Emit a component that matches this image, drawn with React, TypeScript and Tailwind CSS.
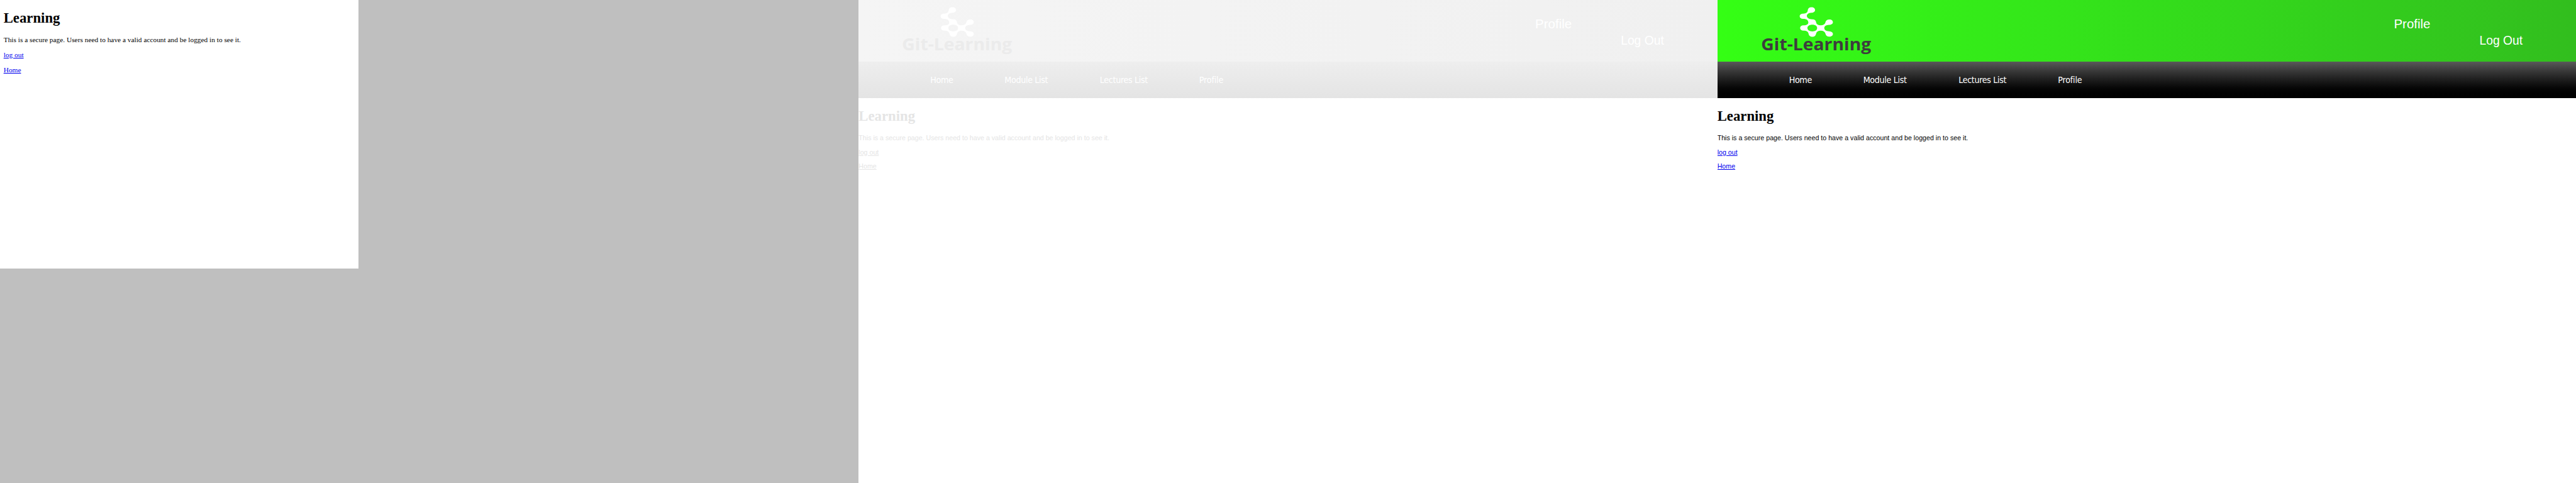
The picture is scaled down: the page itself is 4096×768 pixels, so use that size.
import clsx from "clsx";

const MESSAGE = "This is a secure page. Users need to have a valid account and be logged in to see it.";

function Logo({ faded }: { faded: boolean }) {
  return (
    <svg viewBox="0 0 338 138" className="h-[98.13px] w-[240.36px] shrink-0 overflow-visible" role="img" aria-label="Git-Learning">
      <g transform="translate(60 0) scale(0.33333)" fill="#ffffff" fillRule="evenodd">
        <path d="M449 49C466 49 474 58 474 67C474 78 464 85 449 85C429 87 419 95 419 107C419 120 432 129 455 130C472 130 480 138 481 150C484 164 494 170 512 170C530 170 540 163 543 152C546 138 555 131 570 131C586 131 594 140 594 149C594 159 584 167 568 167C546 168 536 177 536 188C536 201 547 209 568 210C586 211 594 219 594 228C594 238 584 246 570 246C555 246 546 238 544 226C540 213 530 206 512 206C494 206 484 213 481 226C479 240 470 247 456 247C442 247 433 240 431 228C429 214 418 206 398 206C382 206 374 198 374 188C374 178 382 170 398 170C418 170 430 163 429 150C428 136 418 127 395 127C379 127 371 119 371 109C371 99 380 92 395 92C415 91 424 84 425 70C427 56 435 49 449 49ZM423 188C423 202 436 211 456 211C476 211 488 202 488 188C488 175 476 166 456 166C436 166 423 175 423 188Z" />
      </g>
      <text
        x="97.5"
        y="112.7"
        textLength="246"
        lengthAdjust="spacingAndGlyphs"
        className={clsx("font-['Open_Sans',sans-serif] text-[36.4px] font-bold", faded ? "fill-[#ebebeb]" : "fill-[#3d3d3d]")}
      >
        Git-Learning
      </text>
    </svg>
  );
}

function LearningPage({ faded = false }: { faded?: boolean }) {
  const link = clsx("underline", faded ? "text-[#e5e5e5]" : "text-[#0000ee]");
  return (
    <section className={clsx("h-full flex-1 overflow-hidden bg-white", faded ? "text-[#e5e5e5]" : "text-black")}>
      <header
        className={clsx(
          "flex h-[98.13px] items-start bg-linear-to-r font-['Liberation_Sans',Arial,sans-serif] text-white",
          faded ? "from-[#f5f5f5] to-[#f0f0f0]" : "from-[#34ff14] to-[#32be1e]",
        )}
      >
        <Logo faded={faded} />
        <a className="mt-[26px] ml-[835.4px] w-[136.1px] shrink-0 text-[20.5px] leading-6">Profile</a>
        <a className="mt-[52.7px] text-[19.3px] leading-6 whitespace-nowrap">Log Out</a>
      </header>
      <nav
        className={clsx(
          "flex h-[57.6px] bg-linear-to-b pt-[1px] pl-[114px] font-['DejaVu_Sans_Condensed','DejaVu_Sans',sans-serif] text-[14.2px] leading-[57.6px] font-normal tracking-[-0.35px] whitespace-nowrap text-white [font-stretch:condensed]",
          faded ? "from-[#eeeeee] to-[#e4e4e4]" : "from-[#595959] to-black",
        )}
      >
        <a className="w-[118px]">Home</a>
        <a className="w-[151.5px]">Module List</a>
        <a className="w-[158px]">Lectures List</a>
        <a className="tracking-[-0.2px]">Profile</a>
      </nav>
      <h1 className="pt-[15.3px] font-['Liberation_Serif',serif] text-[22.756px] leading-[27px] font-bold">Learning</h1>
      <div className="mt-[9.9px] font-['Liberation_Sans',Arial,sans-serif] text-[10.667px] leading-[22.75px]">
        <p>{MESSAGE}</p>
        <p>
          <a className={link}>log out</a>
        </p>
        <p>
          <a className={link}>Home</a>
        </p>
      </div>
    </section>
  );
}

function PlainPage() {
  return (
    <section className="h-full flex-1 bg-[#bfbfbf]">
      <div className="h-[427.4px] w-[569.6px] bg-white pt-[15px] pl-[5.69px] font-['Liberation_Serif',serif] text-black">
        <h1 className="text-[22.756px] leading-[27px] font-bold">Learning</h1>
        <div className="mt-[9px] text-[11.378px] leading-6">
          <p>{MESSAGE}</p>
          <p>
            <a className="text-[#0000ee] underline">log out</a>
          </p>
          <p>
            <a className="text-[#0000ee] underline">Home</a>
          </p>
        </div>
      </div>
    </section>
  );
}

export default function App() {
  return (
    <main className="flex h-[768px] w-[4096px] overflow-hidden bg-white">
      <PlainPage />
      <LearningPage faded />
      <LearningPage />
    </main>
  );
}
